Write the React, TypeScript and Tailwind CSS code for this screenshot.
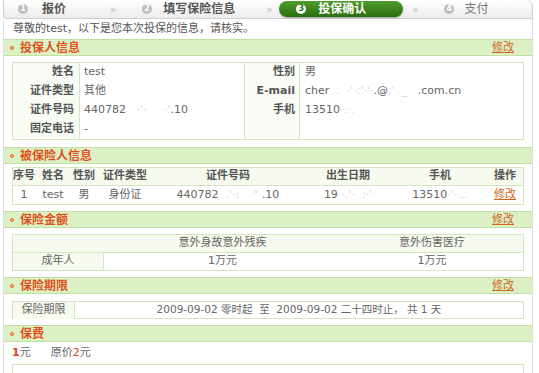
import React from "react";

const font = "font-['DejaVu_Sans','Noto_Sans_CJK_SC',sans-serif]";

const SectionHeader = ({ title, edit = true }: { title: string; edit?: boolean }) => (
    <div className="flex h-[17px] items-center border-y border-[#c2e0a2] bg-[#dbf0c5] pl-[6px] pr-[18px]">
        <span className="mr-[6px] h-[4px] w-[4px] rounded-full border border-[#e8662c] bg-[#f7b48f]" />
        <span className="text-[12px] font-bold leading-none text-[#e0501a]">{title}</span>
        {edit && <a className="ml-auto text-[11px] leading-none text-[#d0671f] underline">修改</a>}
    </div>
);

const Dim = ({ children }: { children: React.ReactNode }) => (
    <span className="text-[#dadada]">{children}</span>
);

const StepCircle = ({ n, active = false }: { n: number; active?: boolean }) => (
    <span
        className={`flex h-[10px] w-[10px] items-center justify-center rounded-full text-[8px] font-bold leading-none ${
            active ? "bg-white text-[#2f7a15]" : "bg-[#bdbdbd] text-white"
        }`}
    >
        {n}
    </span>
);

const App = () => {
    const applicantLeft = [
        ["姓名", "test"],
        ["证件类型", "其他"],
        ["证件号码", <>440782 <Dim>&nbsp;&nbsp;&nbsp;·'· &nbsp;&nbsp;&nbsp;&nbsp;·'</Dim>.10</>],
        ["固定电话", "-"],
    ];
    const applicantRight = [
        ["性别", "男"],
        ["E-mail", <>cher<Dim>&nbsp;&nbsp;. &nbsp;·'·;'·'·</Dim>.@<Dim>;' &nbsp;_&nbsp;&nbsp;&nbsp;</Dim>.com.cn</>],
        ["手机", <>13510<Dim> ·:·.</Dim></>],
        ["", ""],
    ];

    return (
        <div className={`${font} h-[373px] w-[539px] overflow-hidden bg-white text-[#666]`}>
            <div className="ml-[3px] w-[530px]">
                {/* Steps bar */}
                <div className="flex h-[19px] items-center rounded-tr-[6px] rounded-bl-[4px] border-x border-b border-[#cfcfcf] bg-gradient-to-b from-white to-[#ececec] text-[12px] font-bold text-[#555]">
                    <span className="ml-[14px]"><StepCircle n={1} /></span>
                    <span className="ml-[14px]">报价</span>
                    <span className="ml-[44px] text-[10px] font-normal text-[#bbb]">»</span>
                    <span className="ml-[26px]"><StepCircle n={2} /></span>
                    <span className="ml-[11px]">填写保险信息</span>
                    <span className="ml-[31px] text-[10px] font-normal text-[#bbb]">»</span>
                    <div className="ml-[7px] flex h-[16px] w-[124px] items-center rounded-full bg-gradient-to-b from-[#4f9d2c] to-[#2b6e10] pl-[17px] text-white shadow-[0_1px_1px_rgba(0,0,0,0.3)]">
                        <StepCircle n={3} active />
                        <span className="ml-[12px]">投保确认</span>
                    </div>
                    <span className="ml-[9px] text-[10px] font-normal text-[#bbb]">»</span>
                    <span className="ml-[26px]"><StepCircle n={4} /></span>
                    <span className="ml-[10px] font-normal text-[#777]">支付</span>
                </div>

                <div className="border-x border-[#dcdcdc]">
                    <div className="flex h-[20px] items-center pl-[9px] text-[11px] text-[#555]">
                        尊敬的test，以下是您本次投保的信息，请核实。
                    </div>

                    {/* Applicant */}
                    <SectionHeader title="投保人信息" />
                    <div className="px-[8px] pt-[6px] pb-[7px]">
                        <div className="grid grid-cols-[66px_165px_55px_1fr] border border-[#d3e6bd] text-[11px]">
                            <div className="flex flex-col bg-[#f9fcf4]">
                                {applicantLeft.map(([k], i) => (
                                    <div key={i} className="flex h-[19px] items-center justify-end pr-[5px] font-bold text-[#555]">{k}</div>
                                ))}
                            </div>
                            <div className="flex flex-col border-l border-[#d3e6bd]">
                                {applicantLeft.map(([, v], i) => (
                                    <div key={i} className="flex h-[19px] items-center whitespace-nowrap pl-[4px]">{v}</div>
                                ))}
                            </div>
                            <div className="flex flex-col border-l border-[#d3e6bd] bg-[#f9fcf4]">
                                {applicantRight.map(([k], i) => (
                                    <div key={i} className="flex h-[19px] items-center justify-end pr-[4px] font-bold text-[#555]">{k}</div>
                                ))}
                            </div>
                            <div className="flex flex-col border-l border-[#d3e6bd]">
                                {applicantRight.map(([, v], i) => (
                                    <div key={i} className="flex h-[19px] items-center whitespace-nowrap pl-[5px]">{v}</div>
                                ))}
                            </div>
                        </div>
                    </div>

                    {/* Insured */}
                    <SectionHeader title="被保险人信息" edit={false} />
                    <div className="px-[8px] pt-[3px] pb-[6px]">
                        <div className="border border-[#d3e6bd] text-[11px]">
                            <div className="grid h-[18px] grid-cols-[22px_36px_26px_56px_150px_90px_94px_1fr] items-center border-b border-[#d3e6bd] bg-[#f6faef] text-center font-bold text-[#555]">
                                <span>序号</span>
                                <span>姓名</span>
                                <span>性别</span>
                                <span>证件类型</span>
                                <span>证件号码</span>
                                <span>出生日期</span>
                                <span>手机</span>
                                <span>操作</span>
                            </div>
                            <div className="grid h-[18px] grid-cols-[22px_36px_26px_56px_150px_90px_94px_1fr] items-center whitespace-nowrap text-center">
                                <span>1</span>
                                <span>test</span>
                                <span>男</span>
                                <span>身份证</span>
                                <span>440782 <Dim>&nbsp;.'·:&nbsp;&nbsp;&nbsp;&nbsp;"&nbsp;</Dim>.10</span>
                                <span>19<Dim>&nbsp;·.'·&nbsp;&nbsp;:·'</Dim></span>
                                <span>13510<Dim>·'·.,.</Dim></span>
                                <a className="text-[#d0671f] underline">修改</a>
                            </div>
                        </div>
                    </div>

                    {/* Amount */}
                    <SectionHeader title="保险金额" />
                    <div className="px-[8px] pt-[6px] pb-[6px]">
                        <div className="border border-[#d3e6bd] text-[11px]">
                            <div className="grid h-[18px] grid-cols-[91px_237px_1fr] items-center border-b border-[#d3e6bd] bg-[#f6faef] text-center">
                                <span />
                                <span>意外身故意外残疾</span>
                                <span>意外伤害医疗</span>
                            </div>
                            <div className="grid h-[17px] grid-cols-[91px_237px_1fr] text-center">
                                <span className="flex items-center justify-center border-r border-[#d3e6bd] bg-[#f6faef]">成年人</span>
                                <span className="flex items-center justify-center">1万元</span>
                                <span className="flex items-center justify-center">1万元</span>
                            </div>
                        </div>
                    </div>

                    {/* Period */}
                    <SectionHeader title="保险期限" />
                    <div className="px-[8px] pt-[7px] pb-[6px]">
                        <div className="grid h-[18px] grid-cols-[62px_1fr] border border-[#d3e6bd] text-[11px]">
                            <span className="flex items-center justify-center border-r border-[#d3e6bd] bg-[#f6faef]">保险期限</span>
                            <span className="flex items-center justify-center whitespace-nowrap text-[10.5px]">
                                2009-09-02 零时起&nbsp;&nbsp;至&nbsp;&nbsp;2009-09-02 二十四时止，&nbsp;共 1 天
                            </span>
                        </div>
                    </div>

                    {/* Premium */}
                    <SectionHeader title="保费" edit={false} />
                    <div className="flex h-[22px] items-center pl-[8px] text-[11px]">
                        <span className="font-bold text-[#d9430f]">1</span>
                        <span>元</span>
                        <span className="ml-[20px]">原价</span>
                        <span className="text-[#d9430f]">2</span>
                        <span>元</span>
                    </div>
                    <div className="mx-[8px] h-[20px] border-x border-t border-[#d3e6bd]" />
                </div>
            </div>
        </div>
    );
};

export default App;
